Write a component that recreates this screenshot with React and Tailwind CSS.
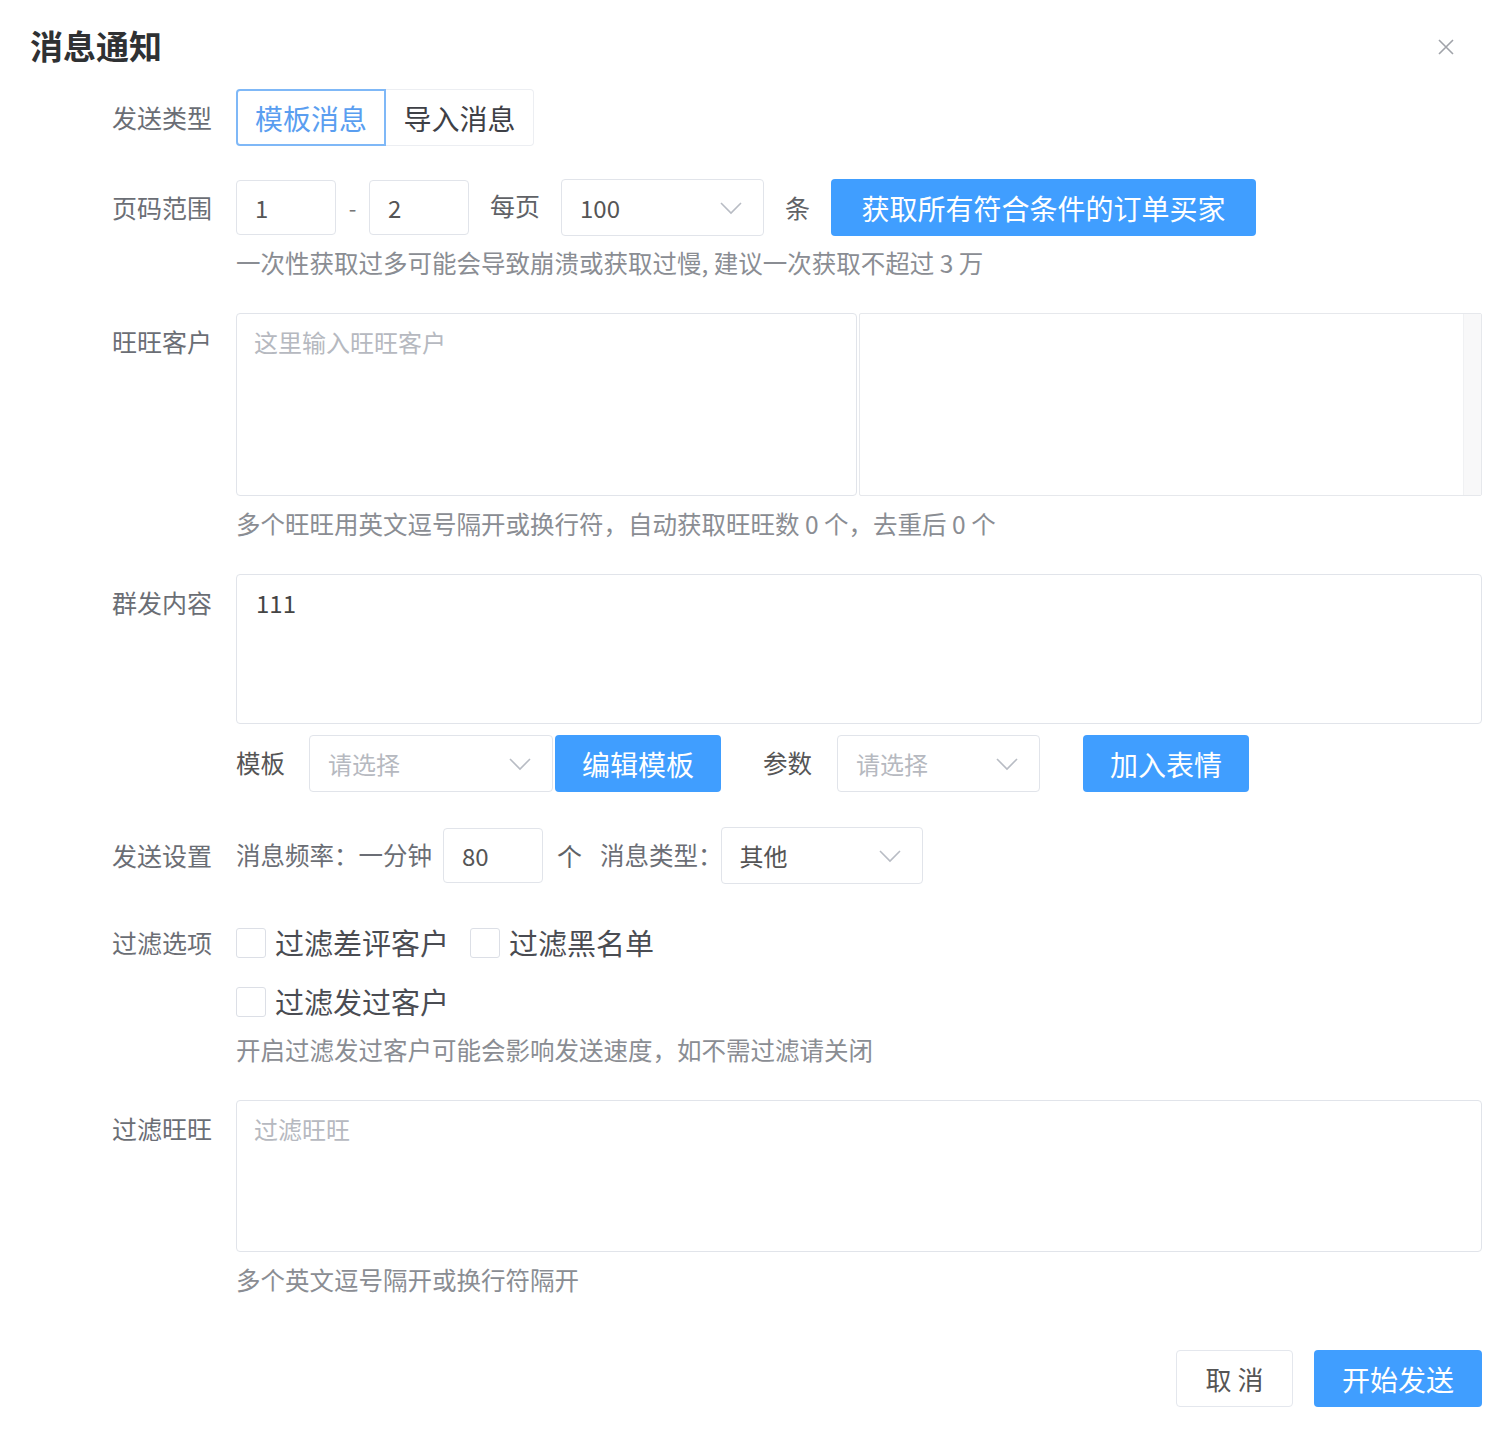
import React from "react";

const FONT = { fontFamily: '"Noto Sans CJK SC", "Noto Sans", sans-serif' };

function Chevron() {
  return (
    <svg width="24" height="14" viewBox="0 0 24 14" fill="none" className="shrink-0">
      <path d="M2 2 L12 12 L22 2" stroke="#b8bcc4" strokeWidth="1.6" fill="none" />
    </svg>
  );
}

function Label({ children }) {
  return (
    <div className="w-[212px] shrink-0 h-[57px] flex items-center justify-end text-[25px] text-[#6b6e75]">
      {children}
    </div>
  );
}

function Select({ value, placeholder, w }) {
  return (
    <div
      className={`${w} h-[57px] border border-[#e1e4ea] rounded-[4px] flex items-center justify-between pl-[18px] pr-[20px] shrink-0`}
    >
      <span className={`text-[24px] ${placeholder ? "text-[#b6b9c0]" : "text-[#555]"}`}>{value}</span>
      <Chevron />
    </div>
  );
}

function Input({ value, w }) {
  return (
    <div className={`${w} h-[55px] border border-[#e1e4ea] rounded-[4px] flex items-center pl-[18px] text-[24px] text-[#555] shrink-0`}>
      {value}
    </div>
  );
}

function BlueBtn({ children, w, className = "" }) {
  return (
    <div
      className={`${w} h-[57px] bg-[#409eff] rounded-[4px] flex items-center justify-center text-white text-[28px] shrink-0 ${className}`}
    >
      {children}
    </div>
  );
}

function Check({ label }) {
  return (
    <div className="flex items-center">
      <div className="w-[30px] h-[30px] border border-[#dcdfe6] rounded-[3px] bg-white" />
      <span className="ml-[9px] text-[29px] text-[#4a4c52]">{label}</span>
    </div>
  );
}

function Hint({ children, className = "" }) {
  return <div className={`h-[28px] leading-[28px] text-[24.5px] text-[#8a8d93] ${className}`}>{children}</div>;
}

export default function App() {
  return (
    <div className="w-[1500px] h-[1440px] bg-white relative" style={FONT}>
      {/* Header */}
      <div className="flex items-center justify-between pl-[30px] pr-[44px] pt-[24px] h-[66px]">
        <div className="text-[33px] font-bold text-[#2f3133] leading-[42px]">消息通知</div>
        <svg width="20" height="20" viewBox="0 0 20 20" className="mt-[4px]">
          <path d="M3 3 L17 17 M17 3 L3 17" stroke="#a0a3a9" strokeWidth="1.6" />
        </svg>
      </div>

      <div className="pr-[18px] flex flex-col">
        {/* 发送类型 */}
        <div className="flex items-start gap-[24px] mt-[23px]">
          <Label>发送类型</Label>
          <div className="flex">
            <div className="w-[150px] h-[57px] border-2 border-[#7fb8f7] rounded-l-[4px] flex items-center justify-center text-[28px] text-[#5a9ef0]">
              模板消息
            </div>
            <div className="w-[148px] h-[57px] border border-[#eceef2] border-l-0 rounded-r-[4px] flex items-center justify-center text-[28px] text-[#3e4046]">
              导入消息
            </div>
          </div>
        </div>

        {/* 页码范围 */}
        <div className="flex items-start gap-[24px] mt-[33px]">
          <Label>页码范围</Label>
          <div className="flex flex-col">
            <div className="flex items-center h-[57px]">
              <Input value="1" w="w-[100px]" />
              <span className="w-[33px] text-center text-[22px] text-[#777]">-</span>
              <Input value="2" w="w-[100px]" />
              <span className="ml-[21px] mr-[21px] text-[25px] text-[#606266] -mt-[4px]">每页</span>
              <Select value="100" w="w-[203px]" />
              <span className="ml-[21px] mr-[21px] text-[25px] text-[#606266]">条</span>
              <BlueBtn w="w-[425px]">获取所有符合条件的订单买家</BlueBtn>
            </div>
            <Hint className="mt-[13px]">一次性获取过多可能会导致崩溃或获取过慢, 建议一次获取不超过 3 万</Hint>
          </div>
        </div>

        {/* 旺旺客户 */}
        <div className="flex items-start gap-[24px] mt-[36px]">
          <Label>旺旺客户</Label>
          <div className="flex-1 flex flex-col">
            <div className="flex gap-[2px] h-[183px]">
              <div className="w-[621px] shrink-0 border border-[#e1e4ea] rounded-[4px] pl-[17px] pt-[10px] text-[24px] text-[#b6b9c0]">
                这里输入旺旺客户
              </div>
              <div className="flex-1 border border-[#e6e8ec] rounded-[2px] flex justify-end">
                <div className="w-[18px] h-full bg-[#f8f8f9] border-l border-[#f0f1f3]" />
              </div>
            </div>
            <Hint className="mt-[14px]">多个旺旺用英文逗号隔开或换行符，自动获取旺旺数 0 个，去重后 0 个</Hint>
          </div>
        </div>

        {/* 群发内容 */}
        <div className="flex items-start gap-[24px] mt-[36px]">
          <Label>群发内容</Label>
          <div className="flex-1 flex flex-col">
            <div className="h-[150px] border border-[#e1e4ea] rounded-[4px] pl-[19px] pt-[10px] text-[24px] text-[#444]">
              111
            </div>
            <div className="flex items-center mt-[11px]">
              <span className="text-[24.5px] text-[#555] mr-[24px]">模板</span>
              <Select value="请选择" placeholder w="w-[244px]" />
              <BlueBtn w="w-[166px]" className="ml-[2px]">编辑模板</BlueBtn>
              <span className="text-[24.5px] text-[#555] ml-[42px] mr-[25px]">参数</span>
              <Select value="请选择" placeholder w="w-[203px]" />
              <BlueBtn w="w-[166px]" className="ml-[43px]">加入表情</BlueBtn>
            </div>
          </div>
        </div>

        {/* 发送设置 */}
        <div className="flex items-start gap-[24px] mt-[35px]">
          <Label>发送设置</Label>
          <div className="flex items-center h-[57px]">
            <span className="text-[24.5px] text-[#6b6e75]">消息频率：一分钟</span>
            <div className="ml-[11px]">
              <Input value="80" w="w-[100px]" />
            </div>
            <span className="ml-[14px] text-[25px] text-[#606266]">个</span>
            <span className="ml-[18px] text-[24.5px] text-[#6b6e75]">消息类型：</span>
            <div className="-ml-[2px]">
              <Select value="其他" w="w-[202px]" />
            </div>
          </div>
        </div>

        {/* 过滤选项 */}
        <div className="flex items-start gap-[24px] mt-[37px]">
          <div className="w-[212px] shrink-0 h-[44px] flex items-center justify-end text-[25px] text-[#6b6e75]">
            过滤选项
          </div>
          <div className="flex flex-col">
            <div className="flex items-center h-[44px] gap-[21px]">
              <Check label="过滤差评客户" />
              <Check label="过滤黑名单" />
            </div>
            <div className="flex items-center h-[44px] mt-[15px]">
              <Check label="过滤发过客户" />
            </div>
            <Hint className="mt-[12px]">开启过滤发过客户可能会影响发送速度，如不需过滤请关闭</Hint>
          </div>
        </div>

        {/* 过滤旺旺 */}
        <div className="flex items-start gap-[24px] mt-[36px]">
          <Label>过滤旺旺</Label>
          <div className="flex-1 flex flex-col">
            <div className="h-[152px] border border-[#e1e4ea] rounded-[4px] pl-[17px] pt-[10px] text-[24px] text-[#b6b9c0]">
              过滤旺旺
            </div>
            <Hint className="mt-[14px]">多个英文逗号隔开或换行符隔开</Hint>
          </div>
        </div>

        {/* Footer */}
        <div className="flex justify-end gap-[21px] mt-[56px]">
          <div className="w-[117px] h-[57px] border border-[#e4e7ed] rounded-[4px] flex items-center justify-center text-[26px] text-[#555]">
            取 消
          </div>
          <BlueBtn w="w-[168px]">开始发送</BlueBtn>
        </div>
      </div>
    </div>
  );
}
